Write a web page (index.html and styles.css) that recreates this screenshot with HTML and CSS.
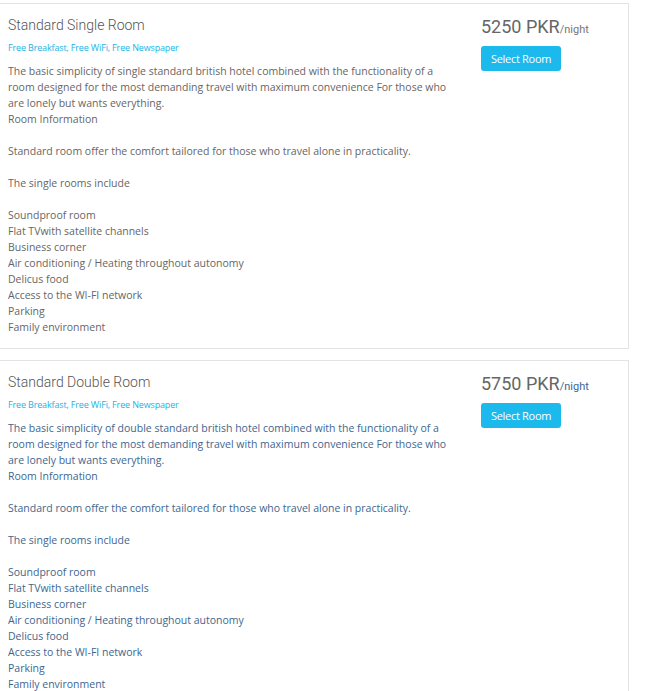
FILE: index.html
```html
<!DOCTYPE html>
<html>
<head>
<meta charset="utf-8">
<link rel="stylesheet" href="styles.css">
</head>
<body>
<div class="list">
  <div class="room">
    <div class="info">
      <h3 class="title">Standard Single Room</h3>
      <div class="amen">Free Breakfast, Free WiFi, Free Newspaper</div>
      <div class="desc">The basic simplicity of single standard british hotel combined with the functionality of a room designed for the most demanding travel with maximum convenience For those who are lonely but wants everything.<br>Room Information<br><br>Standard room offer the comfort tailored for those who travel alone in practicality.<br><br>The single rooms include<br><br>Soundproof room<br>Flat TVwith satellite channels<br>Business corner<br>Air conditioning / Heating throughout autonomy<br>Delicus food<br>Access to the WI-FI network<br>Parking<br>Family environment</div>
    </div>
    <div class="side">
      <div class="price">5250 PKR<span class="per">/night</span></div>
      <a class="btn">Select Room</a>
    </div>
  </div>
  <div class="room hover">
    <div class="info">
      <h3 class="title">Standard Double Room</h3>
      <div class="amen">Free Breakfast, Free WiFi, Free Newspaper</div>
      <div class="desc">The basic simplicity of double standard british hotel combined with the functionality of a room designed for the most demanding travel with maximum convenience For those who are lonely but wants everything.<br>Room Information<br><br>Standard room offer the comfort tailored for those who travel alone in practicality.<br><br>The single rooms include<br><br>Soundproof room<br>Flat TVwith satellite channels<br>Business corner<br>Air conditioning / Heating throughout autonomy<br>Delicus food<br>Access to the WI-FI network<br>Parking<br>Family environment</div>
    </div>
    <div class="side">
      <div class="price">5750 PKR<span class="per">/night</span></div>
      <a class="btn">Select Room</a>
    </div>
  </div>
</div>
</body>
</html>
```
FILE: styles.css
```css
html, body { margin: 0; padding: 0; background: #fff; }
body { font-family: "Open Sans", sans-serif; color: #666; overflow: hidden; }
.list { padding-top: 3px; width: 630px; margin-left: -1px; display: flex; flex-direction: column; gap: 11px; }
.room { border: 1px solid #e3e3e3; display: flex; padding: 12px 0 13px 8px; }
.info { width: 445px; }
.title { margin: 0; font-family: Roboto, sans-serif; font-weight: 300; font-size: 14px; line-height: 18px; color: #555; }
.amen { margin-top: 8px; font-size: 9px; line-height: 12px; color: #19b3e6; letter-spacing: -0.15px; }
.desc { margin-top: 9px; font-size: 10.5px; line-height: 16px; color: #666; }
.side { margin-left: 28px; }
.price { font-family: Roboto, sans-serif; font-size: 18px; line-height: 22px; color: #666; font-weight: 400; }
.per { font-size: 11px; color: #777; }
.btn { display: inline-block; margin-top: 5px; background: #1bb9ec; color: #fff; font-size: 11px; line-height: 25px; padding: 0 10px; border-radius: 3px; letter-spacing: -0.3px; }
.hover .desc, .hover .per { color: #3e6690; }
```
